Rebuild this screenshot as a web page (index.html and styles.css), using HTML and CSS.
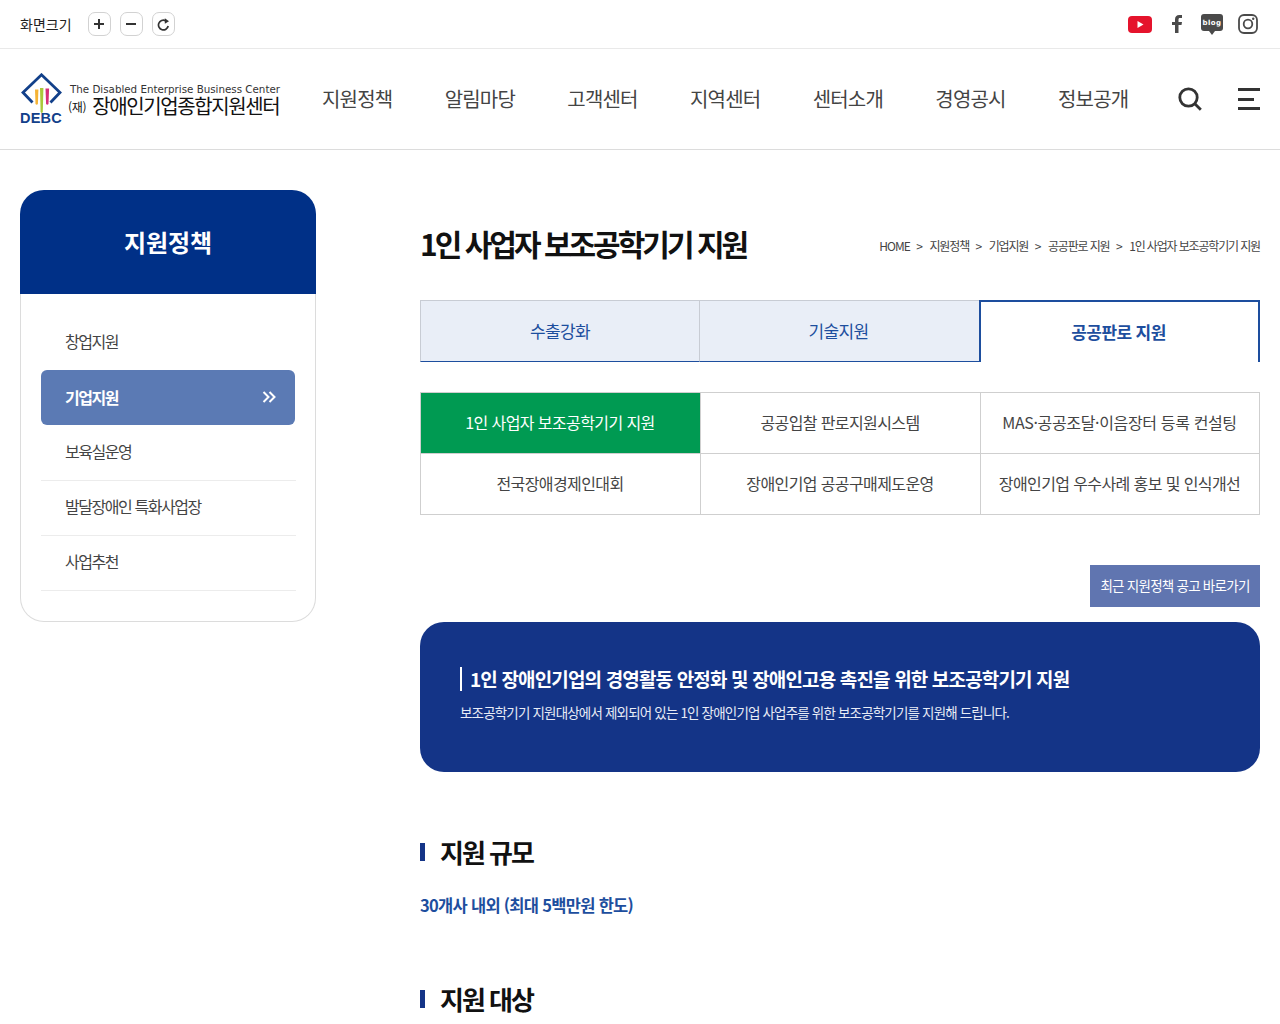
FILE: index.html
```html
<!DOCTYPE html>
<html lang="ko">
<head>
<meta charset="utf-8">
<title>1인 사업자 보조공학기기 지원</title>
<link rel="stylesheet" href="styles.css">
</head>
<body>
<div class="topbar">
  <div class="zoom">
    <span class="zoom-label">화면크기</span>
    <button class="zoom-btn"><svg width="12" height="12" viewBox="0 0 12 12"><path d="M6 1v10M1 6h10" stroke="#333" stroke-width="2"/></svg></button>
    <button class="zoom-btn"><svg width="12" height="12" viewBox="0 0 12 12"><path d="M1 6h10" stroke="#333" stroke-width="2"/></svg></button>
    <button class="zoom-btn"><svg width="13" height="13" viewBox="0 0 12 12"><path d="M10.300 7.400A4.500 4.500 0 1 1 7.900 2.500" fill="none" stroke="#333" stroke-width="1.600"/><path d="M7.200 0.200l3.900 2.700-3.900 2.500z" fill="#333"/></svg></button>
  </div>
  <div class="social">
    <svg width="24" height="17" viewBox="0 0 24 17"><rect width="24" height="17" rx="4" fill="#e5132c"/><path d="M9.500 5l6 3.500-6 3.500z" fill="#fff"/></svg>
    <svg class="ic-f" width="10" height="18" viewBox="0 0 10 18"><path d="M3 18V10H0V7h3V4.500C3 1.600 4.600 0 7.200 0H10v3H8C6.800 3 6.500 3.600 6.500 4.600V7H10l-.5 3h-3v8z" fill="#4a4a4a"/></svg>
    <span class="blog"><span class="blog-text">blog</span></span>
    <svg width="20" height="20" viewBox="0 0 20 20"><rect x="1" y="1" width="18" height="18" rx="5" fill="none" stroke="#4a4a4a" stroke-width="1.800"/><circle cx="10" cy="10" r="4.300" fill="none" stroke="#4a4a4a" stroke-width="1.800"/><circle cx="15.200" cy="4.800" r="1.200" fill="#4a4a4a"/></svg>
  </div>
</div>

<header class="header">
  <a class="logo">
    <span class="logo-mark">
      <svg width="42" height="42" viewBox="0 0 42 42">
        <path d="M12.500 29.500L3 19.500 21.500 1.800 40 19.500l-9.500 10" fill="none" stroke="#12408a" stroke-width="2.800"/>
        <path d="M15 16.500h3.400l-.5 14.500q-1.200 1.500-2.400 0z" fill="#f5b335"/>
        <path d="M20 15h3.400l-.6 24q-1.100 1.800-2.200 0z" fill="#a9c93a"/>
        <path d="M25.500 15.500h3.600l-.6 15.500q-1.200 1.500-2.400 0z" fill="#d62e78"/>
      </svg>
      <span class="logo-debc">DEBC</span>
    </span>
    <span class="logo-text">
      <span class="logo-en">The Disabled Enterprise Business Center</span>
      <span class="logo-ko"><small>(재)</small>장애인기업종합지원센터</span>
    </span>
  </a>
  <nav class="nav">
    <a>지원정책</a><a>알림마당</a><a>고객센터</a><a>지역센터</a><a>센터소개</a><a>경영공시</a><a>정보공개</a>
  </nav>
  <div class="tools">
    <svg width="24" height="24" viewBox="0 0 24 24"><circle cx="10.500" cy="10.500" r="8.700" fill="none" stroke="#333" stroke-width="2.800"/><path d="M16.800 16.800l6 6" stroke="#333" stroke-width="2.800"/></svg>
    <span class="burger"><i></i><i class="short"></i><i></i></span>
  </div>
</header>

<div class="page">
  <aside class="side">
    <h2 class="side-title">지원정책</h2>
    <ul class="side-menu">
      <li>창업지원</li>
      <li class="on">기업지원<svg width="14" height="12" viewBox="0 0 14 12"><path d="M1.500 1l5 5-5 5M7.500 1l5 5-5 5" fill="none" stroke="#fff" stroke-width="2"/></svg></li>
      <li>보육실운영</li>
      <li>발달장애인 특화사업장</li>
      <li>사업추천</li>
    </ul>
  </aside>

  <main class="main">
    <div class="title-row">
      <h1>1인 사업자 보조공학기기 지원</h1>
      <div class="crumbs"><span class="crumb-home">HOME</span><b>&gt;</b><span>지원정책</span><b>&gt;</b><span>기업지원</span><b>&gt;</b><span>공공판로 지원</span><b>&gt;</b><span>1인 사업자 보조공학기기 지원</span></div>
    </div>

    <div class="tabs">
      <a>수출강화</a><a>기술지원</a><a class="on">공공판로 지원</a>
    </div>

    <div class="subs">
      <a class="on">1인 사업자 보조공학기기 지원</a>
      <a>공공입찰 판로지원시스템</a>
      <a>MAS·공공조달·이음장터 등록 컨설팅</a>
      <a>전국장애경제인대회</a>
      <a>장애인기업 공공구매제도운영</a>
      <a>장애인기업 우수사례 홍보 및 인식개선</a>
    </div>

    <div class="link-row"><a class="link-btn">최근 지원정책 공고 바로가기</a></div>

    <section class="banner">
      <h3>1인 장애인기업의 경영활동 안정화 및 장애인고용 촉진을 위한 보조공학기기 지원</h3>
      <p>보조공학기기 지원대상에서 제외되어 있는 1인 장애인기업 사업주를 위한 보조공학기기를 지원해 드립니다.</p>
    </section>

    <h4 class="sec">지원 규모</h4>
    <p class="em">30개사 내외 (최대 5백만원 한도)</p>
    <h4 class="sec">지원 대상</h4>
  </main>
</div>
</body>
</html>
```
FILE: styles.css
```css
* { box-sizing: border-box; }
html, body { margin: 0; padding: 0; height: 1024px; overflow: hidden; background: #fff; }
body { font-family: "Noto Sans CJK KR", "Noto Sans", sans-serif; color: #333; }
a { color: inherit; text-decoration: none; }
h1, h2, h3, h4, p, ul { margin: 0; padding: 0; }
ul { list-style: none; }

.topbar { height: 49px; border-bottom: 1px solid #e9e9e9; padding: 0 20px; display: flex; align-items: center; justify-content: space-between; }
.zoom { display: flex; align-items: center; gap: 9px; }
.zoom-label { font-size: 14px; margin-right: 7px; color: #222; }
.zoom-btn { width: 23px; height: 24px; padding: 0; border: 1px solid #d2d2d2; border-radius: 7px; background: #fff; display: flex; align-items: center; justify-content: center; }
.social { display: flex; align-items: center; margin-right: 2px; }
.ic-f { margin: 0 19px 0 20px; }
.blog { position: relative; width: 22px; height: 17px; margin: -3px 15px 0 0; background: #4a4a4a; border-radius: 3px; display: flex; align-items: center; justify-content: center; }
.blog::after { content: ""; position: absolute; left: 8px; top: 17px; border: 3px solid transparent; border-top: 4px solid #4a4a4a; }
.blog-text { font-family: "DejaVu Sans", sans-serif; font-size: 7px; font-weight: 700; letter-spacing: 0.4px; color: #fff; }

.header { height: 101px; border-bottom: 1px solid #dcdcdc; padding: 0 20px; display: flex; align-items: center; }
.logo { width: 302px; display: flex; align-items: flex-start; flex: none; margin-top: 1px; }
.logo-mark { position: relative; width: 50px; height: 54px; flex: none; }
.logo-mark svg { display: block; }
.logo-debc { position: absolute; left: 0; top: 37px; font-family: "Liberation Sans", sans-serif; font-weight: 700; font-size: 14.500px; line-height: 17px; color: #12408a; letter-spacing: 0.2px; }
.logo-text { display: flex; flex-direction: column; margin-top: 10px; color: #222; }
.logo-en { font-family: "DejaVu Sans", sans-serif; font-size: 10.300px; line-height: 12px; white-space: nowrap; color: #333; }
.logo-ko { font-size: 20px; line-height: 22px; letter-spacing: -1.400px; white-space: nowrap; color: #111; margin-left: -2px; }
.logo-ko small { font-size: 12px; letter-spacing: -0.300px; margin-right: 6px; vertical-align: 2px; }

.nav { display: flex; gap: 52.250px; flex: none; }
.nav a { font-size: 20px; line-height: 30px; letter-spacing: -0.800px; color: #444; white-space: nowrap; }
.tools { margin-left: auto; display: flex; align-items: center; gap: 36px; }
.tools svg { display: block; }
.burger { width: 22px; height: 22px; display: flex; flex-direction: column; justify-content: space-between; }
.burger i { display: block; height: 3px; background: #333; }
.burger .short { width: 16px; }

.page { padding: 40px 20px 0; display: grid; grid-template-columns: 296px 840px; justify-content: space-between; align-items: start; }

.side-title { height: 104px; padding-bottom: 2px; background: #003087; border-radius: 24px 24px 0 0; color: #fff; font-size: 24px; font-weight: 700; letter-spacing: -0.100px; display: flex; align-items: center; justify-content: center; }
.side-menu { padding: 21px 20px 30px; border: 1px solid #dcdcdc; border-top: 0; border-radius: 0 0 24px 24px; }
.side-menu li { height: 55px; padding: 0 24px 4px; margin-right: -1px; border-bottom: 1px solid #ececec; font-size: 16px; letter-spacing: -1.450px; color: #444; display: flex; align-items: center; justify-content: space-between; }
.side-menu li:first-child { border-bottom: 0; }
.side-menu li:nth-child(3) { height: 56px; }
.side-menu li.on { margin-right: 0; background: #5b7ab4; border-bottom: 0; border-radius: 6px; color: #fff; font-weight: 700; padding: 0 19px 2px 24px; }

.title-row { height: 110px; display: flex; align-items: flex-start; justify-content: space-between; padding-top: 31px; }
.title-row h1 { font-size: 30px; line-height: 44px; font-weight: 700; letter-spacing: -3px; color: #111; }
.crumbs { display: flex; align-items: center; gap: 6.500px; padding-top: 15px; font-size: 12px; letter-spacing: -1.150px; line-height: 20px; color: #444; white-space: nowrap; }
.crumbs b { font-weight: 400; letter-spacing: 0; }
.crumb-home { letter-spacing: -1px; }

.tabs { display: grid; grid-template-columns: 279px 280px 281px; height: 62px; }
.tabs a { padding-bottom: 2px; display: flex; align-items: center; justify-content: center; font-size: 17px; letter-spacing: -0.600px; color: #1d4e9e; background: #e9eef7; border: 1px solid #c8ccd4; border-bottom: 1px solid #1d4e9e; border-right: 0; }
.tabs a:nth-child(2) { padding-right: 2px; }
.tabs a.on { background: #fff; font-weight: 700; padding: 0 2px 2px 0; border: 2px solid #1d4e9e; border-bottom: 0; }

.subs { margin-top: 30px; display: grid; grid-template-columns: 280px 280px 279px; border-right: 1px solid #cfcfcf; border-bottom: 1px solid #cfcfcf; }
.subs a { height: 61px; padding: 0 1px 2px 0; display: flex; align-items: center; justify-content: center; font-size: 16px; letter-spacing: -0.600px; color: #444; border-left: 1px solid #cfcfcf; border-top: 1px solid #cfcfcf; white-space: nowrap; }
.subs a:nth-child(n+4) { padding-bottom: 3px; }
.subs a:nth-child(3) { letter-spacing: -0.350px; }
.subs a.on { background: #009a52; color: #fff; }

.link-row { margin-top: 50px; display: flex; justify-content: flex-end; }
.link-btn { width: 170px; height: 42px; padding-bottom: 3px; background: #6075b0; color: #fff; font-size: 13.500px; letter-spacing: -0.750px; display: flex; align-items: center; justify-content: center; }

.banner { margin-top: 15px; height: 150px; border-radius: 24px; background: #143487; color: #fff; padding: 45px 40px 0; }
.banner h3 { border-left: 2px solid #fff; padding-left: 8px; font-size: 19px; line-height: 24px; font-weight: 700; letter-spacing: -0.850px; white-space: nowrap; }
.banner p { margin-top: 11px; font-size: 13.500px; line-height: 20px; letter-spacing: -0.830px; color: #e8ecf6; white-space: nowrap; }

.sec { margin-top: 62px; height: 36px; padding-left: 20px; font-size: 26px; line-height: 36px; font-weight: 700; letter-spacing: -2px; color: #111; position: relative; }
.sec::before { content: ""; position: absolute; left: 0; top: 9px; width: 5px; height: 18px; background: #143487; }
.em { margin-top: 22px; font-size: 16.500px; line-height: 26px; font-weight: 700; letter-spacing: -0.700px; color: #1d4e9e; }
.em + .sec { margin-top: 63px; }
```
